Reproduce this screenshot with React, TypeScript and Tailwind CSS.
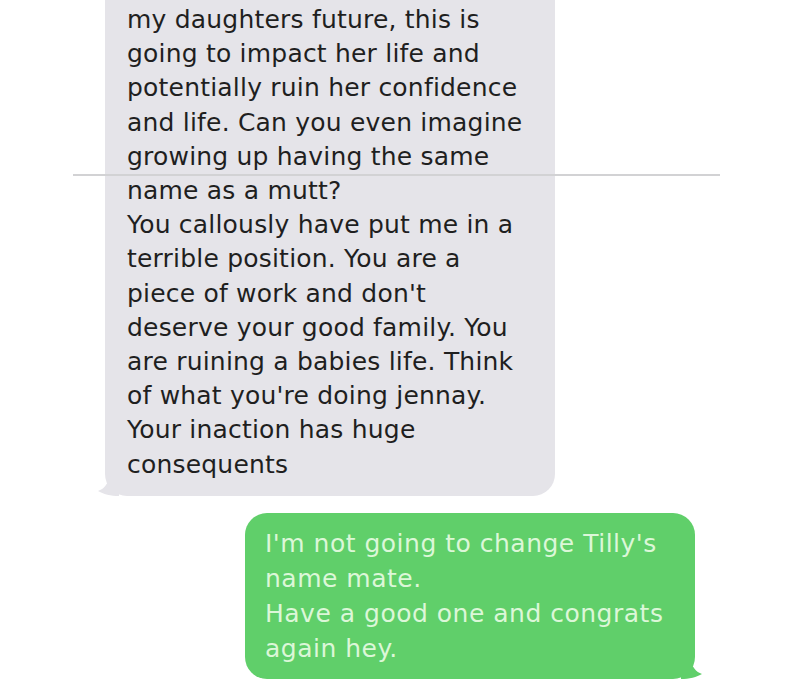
const textFont = "font-['DejaVu_Sans','Liberation_Sans',sans-serif]";

const incoming = [
  'my daughters future, this is',
  'going to impact her life and',
  'potentially ruin her confidence',
  'and life. Can you even imagine',
  'growing up having the same',
  'name as a mutt?',
  'You callously have put me in a',
  'terrible position. You are a',
  "piece of work and don't",
  'deserve your good family. You',
  'are ruining a babies life. Think',
  "of what you're doing jennay.",
  'Your inaction has huge',
  'consequents',
];

const outgoing = [
  "I'm not going to change Tilly's",
  'name mate.',
  'Have a good one and congrats',
  'again hey.',
];

function Tail({ color, flip }: { color: string; flip?: boolean }) {
  return (
    <svg
      width="22"
      height="22"
      viewBox="0 0 22 22"
      className={flip ? 'absolute -right-[8px] bottom-0 -scale-x-100' : 'absolute -left-[8px] bottom-0'}>
      <path d="M14 0 L22 0 L22 22 C14 22 6 20 1 17 C7 15 11 10 14 0 Z" fill={color} />
    </svg>
  );
}

export default function App() {
  return (
    <div className="relative h-[681px] w-[800px] overflow-hidden bg-white">
      <div className={`flex flex-col ${textFont} text-[25px]`}>
        <div className="relative -mt-[20px] ml-[105px] w-[450px] rounded-[22px] bg-[#e5e4e9] pb-[14px] pl-[22px] pt-[23px] leading-[34.2px] tracking-[0.2px] text-[#1f1f1f]">
          {incoming.map((line, i) => (
            <div key={i} className="whitespace-nowrap">
              {line}
            </div>
          ))}
          <Tail color="#e5e4e9" />
        </div>
        <div className="relative ml-[245px] mt-[17px] w-[450px] rounded-[22px] bg-[#60cf6a] pb-[13px] pl-[20px] pt-[13px] leading-[35px] tracking-[0.5px] text-[#dcf7d8]">
          {outgoing.map((line, i) => (
            <div key={i} className="whitespace-nowrap">
              {line}
            </div>
          ))}
          <Tail color="#60cf6a" flip />
        </div>
      </div>
      <div className="absolute left-[73px] top-[174px] h-[2px] w-[647px] bg-[#d2d2d4]" />
    </div>
  );
}
